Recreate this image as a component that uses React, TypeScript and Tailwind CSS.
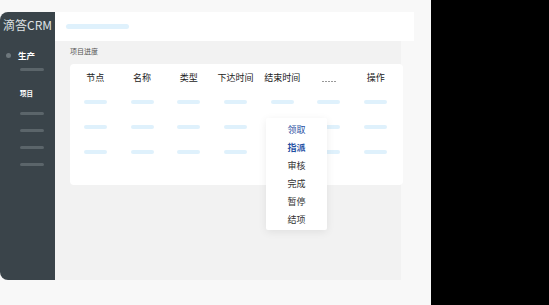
import React from 'react';

const cols = ['节点', '名称', '类型', '下达时间', '结束时间', '.....', '操作'];
const actions = [
  { label: '领取', cls: 'text-[#1f4fa3]' },
  { label: '指派', cls: 'text-[#1f4fa3] font-bold' },
  { label: '审核', cls: 'text-[#333]' },
  { label: '完成', cls: 'text-[#333]' },
  { label: '暂停', cls: 'text-[#333]' },
  { label: '结项', cls: 'text-[#333]' },
];

function Bar() {
  return <div className="h-[4px] w-[23px] rounded-full bg-[#dff1fc]" />;
}

export default function App() {
  return (
    <div
      className="flex h-[305px] w-[549px] overflow-hidden"
      style={{ fontFamily: '"Noto Sans CJK SC", "Noto Sans", sans-serif' }}
    >
      <div className="w-[431px] bg-[#f8f8f8] pt-[12px]">
        <div className="flex">
          {/* sidebar */}
          <div className="flex h-[268px] w-[55px] flex-col rounded-l-[8px] bg-[#3a444a]">
            <div className="mt-[6px] text-center text-[12px] leading-[14px] text-[#dfe2e4]">滴答CRM</div>
            <div className="mt-[18px] flex items-center pl-[6px]">
              <div className="h-[5px] w-[5px] rounded-full bg-[#6d777c]" />
              <span className="ml-[7px] text-[8.5px] font-bold leading-[10px] text-white">生产</span>
            </div>
            <div className="ml-[20px] mt-[8px] h-[3px] w-[24px] rounded-full bg-[#5b656a]" />
            <div className="ml-[20px] mt-[18px] text-[6.5px] font-bold leading-[8px] text-white">项目</div>
            <div className="ml-[20px] mt-[15px] flex flex-col gap-[14px]">
              <div className="h-[3px] w-[24px] rounded-full bg-[#5b656a]" />
              <div className="h-[3px] w-[24px] rounded-full bg-[#5b656a]" />
              <div className="h-[3px] w-[24px] rounded-full bg-[#5b656a]" />
              <div className="h-[3px] w-[24px] rounded-full bg-[#5b656a]" />
            </div>
          </div>

          {/* main */}
          <div className="flex flex-col">
            <div className="flex h-[29px] w-[359px] items-center bg-white pl-[11px]">
              <div className="h-[5px] w-[63px] rounded-full bg-[#dff1fc]" />
            </div>
            <div className="relative h-[239px] w-[346px] bg-[#f2f2f2] pl-[15px]">
              <div className="pt-[6px] text-[7px] leading-[9px] text-[#555]">项目进度</div>
              <div className="mt-[8px] h-[121px] w-[333px] rounded-[4px] bg-white pl-[2px] pr-[4px]">
                <div className="grid grid-cols-7 pt-[8px]">
                  {cols.map((c, i) =>
                    i === 5 ? (
                      <div key={c} className="flex h-[12px] items-end justify-center gap-[1.5px] pb-[2px]">
                        {[0, 1, 2, 3, 4].map((d) => (
                          <div key={d} className="h-[1px] w-[1.5px] bg-[#999]" />
                        ))}
                      </div>
                    ) : (
                      <div key={c} className="text-center text-[9px] leading-[12px] text-[#222]">
                        {c}
                      </div>
                    )
                  )}
                </div>
                <div className="mt-[16px] flex flex-col gap-[21px]">
                  {[0, 1, 2].map((r) => (
                    <div key={r} className="grid grid-cols-7">
                      {cols.map((c, i) => (
                        <div key={c} className="flex justify-center">
                          {r > 0 && i === 4 ? null : <Bar />}
                        </div>
                      ))}
                    </div>
                  ))}
                </div>
              </div>

              {/* dropdown */}
              <div className="absolute left-[211px] top-[77px] flex w-[61px] flex-col items-center rounded-[2px] bg-white pb-[1px] pt-[3px] shadow-[0_2px_8px_rgba(0,0,0,0.08)]">
                {actions.map((a) => (
                  <div key={a.label} className={`text-[9px] leading-[18px] ${a.cls}`}>
                    {a.label}
                  </div>
                ))}
              </div>
            </div>
          </div>
        </div>
      </div>
      <div className="flex-1 bg-black" />
    </div>
  );
}
